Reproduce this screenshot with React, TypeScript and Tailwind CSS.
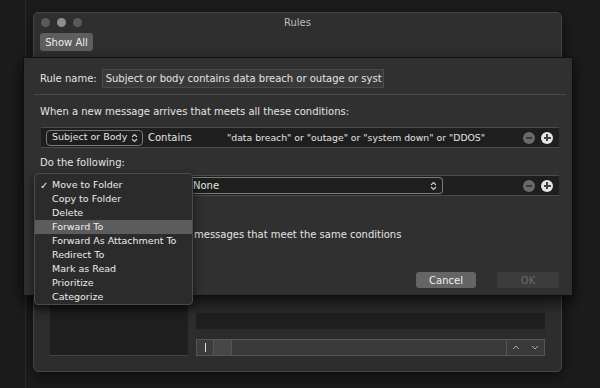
import React from 'react';

const font = { fontFamily: '"DejaVu Sans", "Liberation Sans", sans-serif' };

const menuItems = [
  'Move to Folder',
  'Copy to Folder',
  'Delete',
  'Forward To',
  'Forward As Attachment To',
  'Redirect To',
  'Mark as Read',
  'Prioritize',
  'Categorize',
];

function Stepper() {
  return (
    <svg width="7" height="10" viewBox="0 0 7 10" className="shrink-0">
      <path d="M1 4 L3.5 1.5 L6 4 M1 6 L3.5 8.5 L6 6" fill="none" stroke="#cfcfcf" strokeWidth="1.1" />
    </svg>
  );
}

function MinusPlus() {
  return (
    <div className="flex items-center gap-[6px]">
      <div className="w-[12px] h-[12px] rounded-full bg-[#6a6a6a] flex items-center justify-center">
        <div className="w-[6px] h-[2px] bg-[#3a3a3a]" />
      </div>
      <div className="w-[12px] h-[12px] rounded-full bg-[#e6e6e6] flex items-center justify-center relative">
        <div className="w-[7px] h-[2px] bg-[#444]" />
        <div className="absolute w-[2px] h-[7px] bg-[#444]" />
      </div>
    </div>
  );
}

function ActionMenu() {
  return (
    <div className="absolute left-[34px] top-[173px] w-[159px] h-[132px] rounded-[4px] border border-[#4a4a4a] bg-[#2b2b2b] shadow-[0_4px_10px_rgba(0,0,0,0.6)] pt-[4px] flex flex-col">
      {menuItems.map((item, i) => (
        <div
          key={item}
          className={
            'h-[14px] flex items-center text-[9.5px] text-[#ececec] ' +
            (i === 3 ? 'bg-[#5c5c5c]' : '')
          }
        >
          <span className="w-[17px] pl-[5px] text-[10px]">{i === 0 ? '✓' : ''}</span>
          <span>{item}</span>
        </div>
      ))}
    </div>
  );
}

function RuleSheet() {
  return (
    <div className="absolute left-[23px] top-[57px] w-[550px] h-[239px] bg-[#303030] border border-[#0f0f0f] shadow-[0_6px_14px_rgba(0,0,0,0.7)] flex flex-col text-[10px] text-[#e4e4e4] pb-[7px]">
      <div className="flex items-center gap-[5px] pl-[16px] pt-[11px]">
        <span>Rule name:</span>
        <div className="w-[282px] h-[19px] bg-[#393939] border border-[#4a4a4a] pl-[3px] flex items-center overflow-hidden whitespace-nowrap">
          Subject or body contains data breach or outage or syst
        </div>
      </div>
      <div className="ml-[10px] mr-[6px] mt-[6px] h-px bg-[#474747]" />
      <div className="pl-[16px] mt-[10px] h-[14px] leading-[14px]">When a new message arrives that meets all these conditions:</div>
      <div className="ml-[17px] mr-[13px] mt-[8px] h-[21px] bg-[#1e1e1e] border-y border-[#4a4a4a] flex items-center pl-[5px] pr-[6px]">
        <div className="h-[16px] w-[97px] rounded-[4px] border border-[#7a7a7a] flex items-center justify-between pl-[5px] pr-[4px] whitespace-nowrap text-[9.5px]">
          <span>Subject or Body</span>
          <Stepper />
        </div>
        <span className="ml-[5px] w-[79px]">Contains</span>
        <span className="text-[9.3px] flex-1 whitespace-nowrap">"data breach" or "outage" or "system down" or "DDOS"</span>
        <MinusPlus />
      </div>
      <div className="pl-[16px] mt-[8px] h-[14px] leading-[14px]">Do the following:</div>
      <div className="ml-[17px] mr-[13px] mt-[5px] h-[21px] bg-[#1e1e1e] border-y border-[#4a4a4a] flex items-center pr-[6px]">
        <div className="ml-[152px] h-[17px] w-[250px] rounded-r-[4px] border border-l-0 border-[#7a7a7a] flex items-center justify-between pr-[5px]">
          <span>None</span>
          <Stepper />
        </div>
        <div className="flex-1" />
        <MinusPlus />
      </div>
      {/* checkbox row; its start sits under the open action menu */}
      <div className="pl-[17px] mt-[31px] h-[14px] flex items-center whitespace-nowrap">
        <div className="w-[153px]" />
        <span>messages that meet the same conditions</span>
      </div>
      <div className="flex justify-end gap-[21px] mt-auto mr-[13px]">
        <div className="w-[60px] h-[16px] rounded-[3px] bg-[#656565] flex items-center justify-center text-[#f0f0f0]">Cancel</div>
        <div className="w-[62px] h-[16px] rounded-[3px] bg-[#3c3c3c] flex items-center justify-center text-[#6a6a6a]">OK</div>
      </div>
    </div>
  );
}

function RulesWindow() {
  return (
    <div className="ml-[7px] mt-[12px] w-[529px] h-[360px] rounded-[5px] bg-[#2d2d2d] border border-[#444] flex flex-col shadow-[0_4px_14px_rgba(0,0,0,0.6)]">
      <div className="h-[44px] bg-[#2f2f2f] rounded-t-[5px] flex flex-col px-[6px] pt-[4px]">
        <div className="flex items-center h-[10px] relative">
          <div className="flex gap-[7px] pl-[1px]">
            <div className="w-[9px] h-[9px] rounded-full bg-[#5a5a5a]" />
            <div className="w-[9px] h-[9px] rounded-full bg-[#8e8e8e]" />
            <div className="w-[9px] h-[9px] rounded-full bg-[#5a5a5a]" />
          </div>
          <div className="absolute inset-0 flex items-center justify-center text-[10px] text-[#bdbdbd]">Rules</div>
        </div>
        <div className="mt-[6px] w-[53px] h-[18px] rounded-[3px] bg-[#5e5e5e] flex items-center justify-center text-[10px] text-[#f0f0f0]">
          Show All
        </div>
      </div>
      <div className="flex-1 flex px-[16px] pb-[15px] pt-[10px] gap-[8px]">
        <div className="w-[138px] bg-[#1f1f1f] border-b border-[#444]" />
        <div className="w-[349px] flex flex-col">
          <div className="flex-1 bg-[#2a2a2a]" />
          <div className="h-[16px] bg-[#1f1f1f]" />
          <div className="h-[10px] bg-[#2b2b2b]" />
          <div className="h-[17px] flex border border-[#555] bg-[#3a3a3a]">
            <div className="w-[17px] border-r border-[#555] bg-[#3c3c3c] flex items-center justify-center">
              <div className="w-px h-[9px] bg-[#ddd]" />
            </div>
            <div className="w-[18px] bg-[#474747] border-r border-[#555]" />
            <div className="flex-1" />
            <div className="w-[38px] border-l border-[#555] flex items-center justify-around">
              <svg width="8" height="5" viewBox="0 0 8 5"><path d="M1 4 L4 1 L7 4" fill="none" stroke="#aaa" strokeWidth="1" /></svg>
              <svg width="8" height="5" viewBox="0 0 8 5"><path d="M1 1 L4 4 L7 1" fill="none" stroke="#aaa" strokeWidth="1" /></svg>
            </div>
          </div>
        </div>
      </div>
    </div>
  );
}

export default function App() {
  return (
    <div className="w-[600px] h-[388px] bg-[#1c1c1c] relative overflow-hidden flex" style={font}>
      <div className="w-[26px] h-full border-r border-[#2c2c2c]" />
      <RulesWindow />
      <RuleSheet />
      <ActionMenu />
    </div>
  );
}
